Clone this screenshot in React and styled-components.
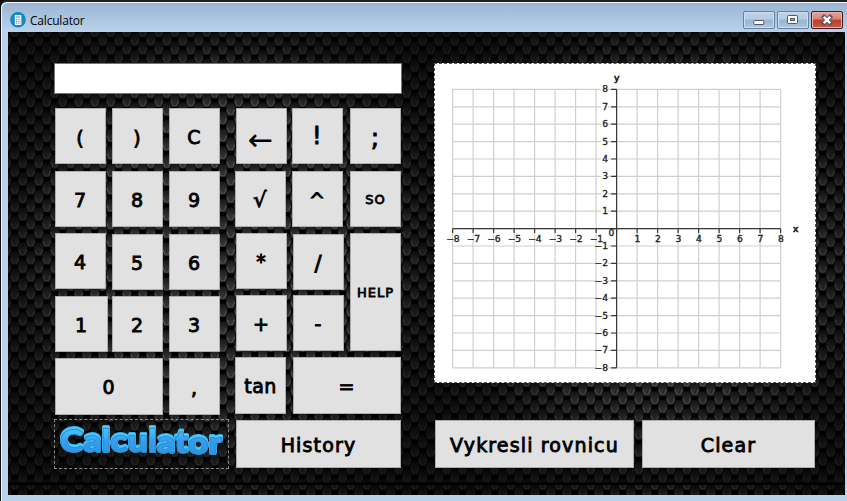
import React from "react";
import styled, { createGlobalStyle } from "styled-components";

const Global = createGlobalStyle`
  *{box-sizing:border-box}
  body{margin:0;background:#080808;overflow:hidden}
`;

const meshTile = `<svg xmlns="http://www.w3.org/2000/svg" width="432" height="453">
<defs>
<linearGradient id="b" x1="0" y1="0" x2="0" y2="1"><stop offset="0" stop-color="#141414"/><stop offset=".6" stop-color="#2e2e2e"/><stop offset="1" stop-color="#343434"/></linearGradient>
<g id="h"><path d="M-1.8 -5.6H1.8L3.9 -1.6V2L2 6.4H-2L-3.9 2V-1.6Z" fill="url(#b)"/><path d="M-4 1.6L-2.2 6.5M2.2 6.5L4 1.6" fill="none" stroke="#808080" stroke-width=".9"/><path d="M-2.4 6.8H2.4" stroke="#8a8a8a" stroke-width=".8"/><path d="M-4 1.6V-1.4L-2.4 -5M4 1.6V-1.4L2.4 -5" fill="none" stroke="#3a3a3a" stroke-width=".6"/></g>
<pattern id="p" width="16" height="17.5" patternUnits="userSpaceOnUse" patternTransform="translate(-1.3 6)"><rect width="17" height="18" fill="#000"/><use href="#h" x="8" y="8.75"/><use href="#h" x="0" y="0"/><use href="#h" x="16" y="0"/><use href="#h" x="0" y="17.5"/><use href="#h" x="16" y="17.5"/></pattern>
<radialGradient id="v" cx=".5" cy=".48" r=".62"><stop offset="0" stop-color="#000" stop-opacity="0"/><stop offset=".5" stop-color="#000" stop-opacity=".08"/><stop offset=".8" stop-color="#000" stop-opacity=".55"/><stop offset="1" stop-color="#000" stop-opacity=".68"/></radialGradient>
</defs><rect width="432" height="453" fill="url(#p)"/><rect width="432" height="453" fill="url(#v)"/><path d="M0 452H432" stroke="#000" stroke-width="3"/></svg>`;
const mesh = `url("data:image/svg+xml,${encodeURIComponent(meshTile)}")`;

const Window = styled.div`
  width: 847px;
  height: 501px;
  padding: 1px 0 0 7px;
  border-top: 2px solid #211f22;
  border-left: 1px solid #101010;
  border-radius: 7px 0 0 0;
  background: linear-gradient(#9ab4d2, #b9d1ea 29px, #bad1ec);
  box-shadow: inset 1px 1px 0 #f5f9fd;
`;
const TitleBar = styled.header`
  height: 29px;
  display: flex;
  align-items: flex-start;
  padding: 8px 4px 0 2px;
`;
const Title = styled.span`
  font: 12px/18px "Open Sans", sans-serif;
  color: #000;
  margin: 1px 0 0 4px;
  letter-spacing: -0.2px;
  flex: 1;
`;
const CaptionButtons = styled.div`
  display: flex;
  gap: 2px;
`;
const CaptionButton = styled.button`
  width: 32px;
  height: 18px;
  padding: 0;
  display: grid;
  place-items: center;
  border-radius: 2px;
  border: 1px solid ${(p) => (p.$close ? "#471527" : "#6580a0")};
  background: ${(p) =>
    p.$close
      ? "linear-gradient(#e6a597,#d9806c 45%,#b93f28 50%,#c45c46)"
      : "linear-gradient(#c0d4ea,#b2cae3 45%,#98b3d0 50%,#adc7e2)"};
  box-shadow: inset 0 0 0 1px ${(p) => (p.$close ? "#ecb3a8" : "#ccdff1")};
`;
const Client = styled.main`
  width: 837px;
  height: 463px;
  display: flex;
  align-items: flex-start;
  padding: 31px 0 0 46px;
  background: #000 ${mesh} 0 0 / 432px 453px;
`;
const LeftPane = styled.section`
  width: 380px;
`;
const Display = styled.input`
  display: block;
  width: 348px;
  height: 31px;
  padding: 0 6px;
  border: 1px solid #777;
  background: #fff;
  font: 18px "DejaVu Sans", sans-serif;
`;
const Keypad = styled.div`
  display: grid;
  grid-template-columns: 57px 57px 66px 57px 58px 51px;
  grid-template-rows: 63px 62px 62px 62px 62px 50px;
  align-items: start;
  justify-items: start;
  margin: 14px 0 0 1px;
`;
const Button = styled.button`
  display: flex;
  align-items: center;
  justify-content: center;
  padding: 2px 0 0;
  border: 1px solid #adadad;
  background: #e1e1e1;
  color: #000;
  width: ${(p) => p.$w || 51}px;
  height: ${(p) => p.$h || 56}px;
  font: ${(p) => p.$size || 19}px "DejaVu Sans", sans-serif;
  letter-spacing: ${(p) => p.$track ?? 1.15}px;
  -webkit-text-stroke: ${(p) => p.$stroke ?? 0.9}px #000;
  white-space: nowrap;
`;
const Key = styled(Button)`
  grid-column: ${(p) => p.$col} / span ${(p) => p.$span || 1};
  grid-row: ${(p) => p.$row} / span ${(p) => p.$rows || 1};
  margin: ${(p) => p.$dy || 0}px 0 0 ${(p) => p.$dx || 0}px;
  padding-top: ${(p) => p.$drop ?? 2}px;
`;
const LogoBox = styled.div`
  grid-column: 1 / span 4;
  grid-row: 6;
  width: 175px;
  height: 50px;
  margin-left: -1px;
  border: 1px dashed #8b8b8b;
`;
const LogoText = styled.text`
  font: 900 31px Lato, sans-serif;
  paint-order: stroke;
  stroke: #2590d2;
  stroke-width: 1.8px;
  stroke-linejoin: round;
  filter: drop-shadow(0.7px -0.8px 0 #3fc0f8) drop-shadow(0.7px -0.8px 0 #50d0ff) drop-shadow(0.6px -0.6px 0 #38aef0);
`;
const RightPane = styled.section`
  width: 382px;
`;
const ChartBox = styled.div`
  width: 382px;
  height: 320px;
  background: #fff;
  border: 1px dashed #555;
`;
const Actions = styled.div`
  display: flex;
  gap: 8px;
  margin: 37px 0 0 1px;
`;
const Drawing = styled.svg`
  display: block;
  overflow: visible;
`;

const small = { $size: 13, $stroke: 0.8, $track: 1 };
const keys = [
  ["(", 1, 1, { $drop: 3 }], [")", 2, 1, { $drop: 3 }], ["C", 3, 1, { $drop: 2 }],
  ["←", 4, 1, { $dx: 1, $size: 30, $stroke: 0.1, $track: 2, $drop: 6 }], ["!", 5, 1, { $size: 24, $drop: 0 }], [";", 6, 1, { $size: 25, $drop: 3 }],
  ["7", 1, 2, {}], ["8", 2, 2, {}], ["9", 3, 2, {}],
  ["√", 4, 2, { $size: 21 }], ["^", 5, 2, { $drop: 1 }], ["SO", 6, 2, { ...small, $drop: 0 }],
  ["4", 1, 3, {}], ["5", 2, 3, { $dy: 1 }], ["6", 3, 3, { $dy: 1 }],
  ["*", 4, 3, { $dx: 1, $drop: 0 }], ["/", 5, 3, { $dx: 1, $dy: 1, $size: 21, $drop: 3 }], ["HELP", 6, 3, { $rows: 2, $h: 118, ...small, $drop: 1 }],
  ["1", 1, 4, { $dy: 1, $w: 53 }], ["2", 2, 4, { $dy: 1 }], ["3", 3, 4, { $dy: 1 }],
  ["+", 4, 4, { $dx: 1, $drop: 2 }], ["-", 5, 4, { $dx: 1, $drop: 2 }],
  ["0", 1, 5, { $span: 2, $w: 108, $h: 57, $dy: 1, $drop: 1 }], [",", 3, 5, { $dy: 1, $h: 57, $drop: 2 }],
  ["tan", 4, 5, { $h: 57, $track: 0.4, $drop: 1 }], ["=", 5, 5, { $dx: 1, $span: 2, $w: 108, $h: 57, $drop: 0 }],
  ["History", 4, 6, { $dx: 1, $dy: 1, $span: 3, $w: 165, $h: 48 }],
];

function AppIcon() {
  return (
    <Drawing width="16" height="16" viewBox="0 0 16 16">
      <circle cx="8" cy="8.7" r="7.8" fill="#1686c3" />
      <rect x="4.8" y="4" width="6.6" height="10" rx=".7" fill="#fff" />
      <path d="M6 6H10.3M6 8.6H7M7.7 8.6H8.7M9.4 8.6H10.4M6 10.4H7M7.7 10.4H8.7M9.4 10.4H10.4M6 12.2H7M7.7 12.2H8.7M9.4 12.2H10.4" stroke="#3b91c1" />
    </Drawing>
  );
}

function Logo() {
  return (
    <Drawing width="173" height="48">
      <defs>
        <linearGradient id="logoFace" x1="0" y1="0" x2=".04" y2="1">
          <stop offset="0.2" stopColor="#48ccfb" />
          <stop offset=".5" stopColor="#3b9cf0" />
          <stop offset="1" stopColor="#2891d4" />
        </linearGradient>
      </defs>
      <LogoText x="5" y="32" dy="0 0 0 0 0 0 0.5 0.5 0.5 0.5" textLength="162" lengthAdjust="spacingAndGlyphs" fill="url(#logoFace)">
        Calculator
      </LogoText>
    </Drawing>
  );
}

const steps = Array.from({ length: 17 }, (_, i) => i - 8);
const X0 = 181.6, Y0 = 164.6, UX = 20.5, UY = 17.4;
const label = (n) => (n < 0 ? "−" + -n : String(n));

function Chart() {
  const font = { fontFamily: "DejaVu Sans, sans-serif", fontSize: 8, fill: "#222", stroke: "#222", strokeWidth: 0.3 };
  return (
    <Drawing width="380" height="318">
      <g stroke="#cfcfcf" strokeWidth="1.2">
        {steps.map((n) => (
          <path key={n} d={`M${X0 + n * UX} ${Y0 - 8 * UY}V${Y0 + 8 * UY}M${X0 - 8 * UX} ${Y0 + n * UY}H${X0 + 8 * UX}`} />
        ))}
      </g>
      <g fill="#fff">
        {steps.filter((n) => n !== 0).map((n) => (
          <rect key={n} x={n < 0 ? 162 : 166} y={Y0 - n * UY - 3.5} width={n < 0 ? 11 : 7} height="7" />
        ))}
      </g>
      <g stroke="#3a3a3a" strokeWidth="1.2">
        <path d={`M${X0} ${Y0 - 8 * UY}V${Y0 + 8 * UY}M${X0 - 8 * UX} ${Y0}H${X0 + 8 * UX}`} />
        {steps.map((n) => (
          <path key={n} d={`M${X0 + n * UX} ${Y0}v4.5M${X0} ${Y0 + n * UY}h-5.5`} />
        ))}
      </g>
      <g {...font}>
        {steps.filter((n) => n).map((n) => (
          <React.Fragment key={n}>
            <text transform={`translate(${X0 + n * UX + 0.3} 178.2) scale(1.15 1)`} textAnchor="middle">{label(n)}</text>
            <text transform={`translate(173 ${Y0 - n * UY + 3}) scale(1.15 1)`} textAnchor="end">{label(n)}</text>
          </React.Fragment>
        ))}
        <text transform="translate(173.6 172.3) scale(1.15 1)">0</text>
        <text transform="translate(181.8 16.5) scale(1.15 1)" textAnchor="middle" strokeWidth=".6">y</text>
        <text transform="translate(360.8 167.7) scale(1.15 1)" textAnchor="middle" strokeWidth=".6">x</text>
      </g>
    </Drawing>
  );
}

export default function App() {
  return (
    <>
      <Global />
      <Window>
        <TitleBar>
          <AppIcon />
          <Title>Calculator</Title>
          <CaptionButtons>
            <CaptionButton aria-label="Minimize">
              <Drawing width="12" height="12"><rect x=".8" y="6.5" width="10" height="4" rx=".8" fill="#fff" stroke="#535766" /></Drawing>
            </CaptionButton>
            <CaptionButton aria-label="Maximize">
              <Drawing width="12" height="12"><rect x=".5" y="1.5" width="10" height="8" rx=".8" fill="#f8f8f8" stroke="#535766" /><rect x="3.5" y="4.5" width="4" height="2" fill="#91aecb" stroke="#535766" /></Drawing>
            </CaptionButton>
            <CaptionButton aria-label="Close" $close>
              <Drawing width="12" height="12"><path d="M3 3L9 9M9 3L3 9" stroke="#535766" strokeWidth="4.4" strokeLinecap="square" /><path d="M2.8 2.8L9.2 9.2M9.2 2.8L2.8 9.2" stroke="#fff" strokeWidth="2.4" /></Drawing>
            </CaptionButton>
          </CaptionButtons>
        </TitleBar>
        <Client>
          <LeftPane>
            <Display aria-label="Expression" />
            <Keypad>
              {keys.map(([text, col, row, opts]) => (
                <Key key={text} $col={col} $row={row} {...opts}>{text}</Key>
              ))}
              <LogoBox><Logo /></LogoBox>
            </Keypad>
          </LeftPane>
          <RightPane>
            <ChartBox><Chart /></ChartBox>
            <Actions>
              <Button $w={199} $h={48}>Vykresli rovnicu</Button>
              <Button $w={173} $h={48}>Clear</Button>
            </Actions>
          </RightPane>
        </Client>
      </Window>
    </>
  );
}
